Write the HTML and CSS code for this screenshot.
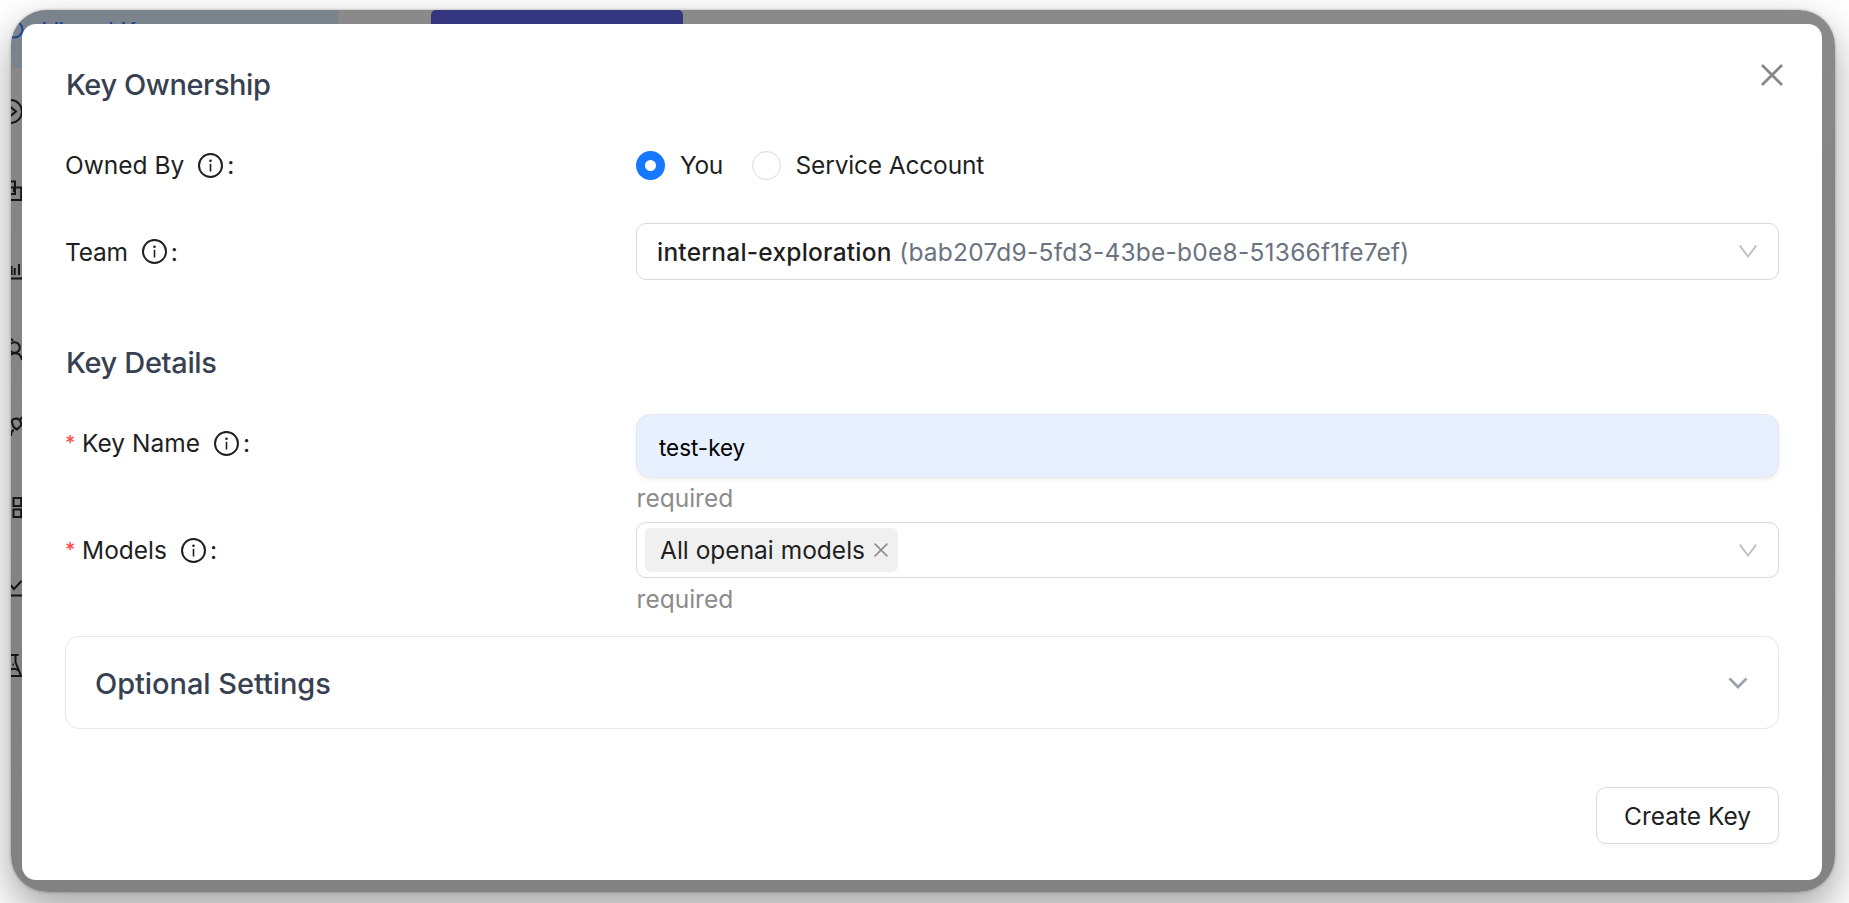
FILE: index.html
```html
<!DOCTYPE html>
<html lang="en">
<head>
<meta charset="utf-8">
<title>Create Key</title>
<link rel="stylesheet" href="styles.css">
</head>
<body>
<svg class="defs" width="0" height="0">
  <symbol id="info" viewBox="0 0 25 25">
    <circle cx="12.5" cy="12.5" r="11.5" fill="none" stroke="currentColor" stroke-width="2"/>
    <circle cx="12.5" cy="7.7" r="1.3" fill="currentColor"/>
    <path d="M12.5 10.8V18.5" stroke="currentColor" stroke-width="1.6"/>
  </symbol>
  <symbol id="arrow" viewBox="0 0 18 13">
    <path d="M.8 .6 9 11.6 17.2 .6" fill="none" stroke="currentColor" stroke-width="1.8"/>
  </symbol>
  <symbol id="cross" viewBox="0 0 22 22">
    <path d="M1 1 21 21M21 1 1 21" fill="none" stroke="currentColor"/>
  </symbol>
</svg>
<div class="window">
  <div class="backdrop">
    <div class="nav-active"></div>
    <div class="primary-tab"></div>
    <div class="nav-text">Virtual Keys</div>
    <svg class="nav-icons" width="14" height="882" viewBox="11 10 14 882" fill="none" stroke="#151515" stroke-width="2">
      <circle cx="14.5" cy="29.5" r="8" stroke="#15458f" stroke-width="2"/>
      <circle cx="10.5" cy="111.500" r="11.500"/>
      <path d="M10 106.500 16 111.500 10 116.500"/>
      <path d="M11 181.500H15V194H11M11 187.500H21.200V200H11M14 187.500V192"/>
      <path d="M11.500 266V275M14.700 268V275M19 264V275M11 278.500H22"/>
      <circle cx="14.500" cy="347.500" r="5.300"/>
      <path d="M10 355Q20 350 22 360M11 338.500 13 341"/>
      <path d="M12 421Q12 418.500 17 418.500Q21 420 21.500 425L17 429.500Q12 427 12 421ZM20 420 22 417M11 436Q11 431 14 430"/>
      <path d="M13.500 498H21.200V506H13.500ZM13.500 509.500H21.200V517H13.500Z"/>
      <path d="M10 584.500 14 589 21.500 581M11 595.500H22"/>
      <path d="M11 655H18.500M15.500 655V662L21 676H11M10 670Q15 667 19 671M12.500 664.500H14"/>
    </svg>
  </div>
  <div class="modal">
    <svg class="close" width="22" height="22"><use href="#cross"/></svg>
    <h2 class="heading heading-owner">Key Ownership</h2>
    <div class="row row-owned">
      <div class="label"><span>Owned By</span><svg class="info" width="25" height="25"><use href="#info"/></svg><span class="colon">:</span></div>
      <div class="radios">
        <span class="radio checked"></span><span class="radio-text t-you">You</span>
        <span class="radio"></span><span class="radio-text t-service">Service Account</span>
      </div>
    </div>
    <div class="row row-team">
      <div class="label"><span class="t-team">Team</span><svg class="info" width="25" height="25"><use href="#info"/></svg><span class="colon">:</span></div>
      <div class="select select-team">
        <span class="team-name">internal-exploration</span><span class="team-id">(bab207d9-5fd3-43be-b0e8-51366f1fe7ef)</span>
        <svg class="arrow" width="18" height="13"><use href="#arrow"/></svg>
      </div>
    </div>
    <h2 class="heading heading-details">Key Details</h2>
    <div class="row row-name">
      <div class="label"><span class="star">*</span><span>Key Name</span><svg class="info" width="25" height="25"><use href="#info"/></svg><span class="colon">:</span></div>
      <div class="field">
        <div class="input">test-key</div>
        <div class="help">required</div>
      </div>
    </div>
    <div class="row row-models">
      <div class="label"><span class="star">*</span><span>Models</span><svg class="info" width="25" height="25"><use href="#info"/></svg><span class="colon">:</span></div>
      <div class="field">
        <div class="select select-models">
          <span class="tag"><span>All openai models</span><svg class="tag-x" width="14" height="14"><use href="#cross"/></svg></span>
          <svg class="arrow" width="18" height="13"><use href="#arrow"/></svg>
        </div>
        <div class="help">required</div>
      </div>
    </div>
    <div class="panel">
      <span>Optional Settings</span>
      <svg width="20" height="13" viewBox="0 0 20 13"><path d="M1.500 1.500 10 10 18.500 1.500" fill="none" stroke="#9ca3af" stroke-width="2.800"/></svg>
    </div>
    <div class="footer"><button class="create">Create Key</button></div>
  </div>
</div>
</body>
</html>
```
FILE: styles.css
```css
* { box-sizing: border-box; }
body {
  margin: 0;
  width: 1849px;
  height: 903px;
  padding: 10px 14px 11px 11px;
  overflow: hidden;
  background: #fff;
  font-family: Inter, "Liberation Sans", sans-serif;
  font-size: 24.5px;
  line-height: 36px;
  color: #1f1f1f;
}
.defs { position: absolute; }
svg { display: block; flex: none; }
.window {
  position: relative;
  width: 1824px;
  height: 882px;
  padding: 14px 13px 12px 11px;
  border-radius: 36px;
  box-shadow: 0 0 3px rgba(0, 0, 0, .3), 0 18px 42px rgba(0, 0, 0, .36);
}
.backdrop {
  position: absolute;
  inset: 0;
  overflow: hidden;
  border-radius: 36px;
  background: linear-gradient(#8a8a8a, #858585 20%, #828282);
}
.nav-active {
  position: absolute;
  left: 0;
  top: 0;
  width: 327px;
  height: 58px;
  background: #7b838c;
}
.primary-tab {
  position: absolute;
  left: 420px;
  top: 0;
  width: 252px;
  height: 20px;
  border-radius: 5px 5px 0 0;
  background: #34367f;
}
.nav-text {
  position: absolute;
  left: 31px;
  top: 4px;
  color: #15458f;
  font-size: 24px;
  letter-spacing: -.2px;
}
.nav-icons { position: absolute; left: 0; top: 0; }
.modal {
  position: relative;
  height: 856px;
  padding: 42px 43px 35px;
  border-radius: 14px;
  background: #fff;
}
.close {
  position: absolute;
  right: 39.5px;
  top: 39.5px;
  color: #888;
  stroke-width: 2.7;
}
.heading {
  margin: 0;
  height: 38px;
  padding-left: 1px;
  line-height: 38px;
  font-size: 29px;
  font-weight: 500;
  letter-spacing: -.42px;
  color: #374151;
}
.row { display: grid; grid-template-columns: 571px 1fr; }
.label { display: flex; align-items: center; height: 36px; white-space: nowrap; }
.t-team { letter-spacing: -.2px; }
.info { margin-left: 14px; }
.colon { margin-left: 4px; }
.star { width: 17px; color: #ff4d4f; font-size: 20px; font-weight: 500; }
.row-owned { margin-top: 43px; }
.radios { display: flex; align-items: center; height: 36px; }
.radio {
  width: 29px;
  height: 29px;
  border: 1px solid #d9d9d9;
  border-radius: 50%;
}
.radio.checked { border: 9px solid #1677ff; }
.radio-text { margin-left: 15px; white-space: nowrap; }
.t-you { width: 71.5px; letter-spacing: -.3px; }
.t-service { letter-spacing: -.16px; }
.row-team { margin-top: 40px; align-items: center; }
.select {
  display: flex;
  align-items: center;
  border: 1px solid #d9d9d9;
  border-radius: 10px;
  white-space: nowrap;
}
.select-team { height: 57px; padding-left: 20px; }
.team-name { font-weight: 500; letter-spacing: .22px; }
.team-id { margin-left: 7.500px; color: #6b7280; letter-spacing: .24px; }
.arrow { margin: 0 21px 0 auto; color: #bfbfbf; }
.heading-details { margin-top: 64px; letter-spacing: -.34px; }
.row-name { margin-top: 32px; height: 108px; }
.row-name .label { margin-top: 11px; }
.input {
  height: 64px;
  padding: 0 22px;
  border: 1px solid #e5e7eb;
  border-radius: 14px;
  background: #e6f0ff;
  box-shadow: 0 2px 4px rgba(0, 0, 0, .06);
  line-height: 66px;
  font-size: 22.4px;
  color: #000;
}
.help { height: 40px; line-height: 40px; padding-left: .6px; color: #8c8c8c; }
.row-models { height: 114px; }
.row-models .label { margin-top: 10px; }
.row-models .help { padding-top: 1px; }
.select-models { height: 56px; padding-left: 8px; }
.tag {
  display: flex;
  align-items: center;
  width: 253px;
  height: 44px;
  padding: 0 10px 0 15px;
  border-radius: 6px;
  background: #f0f0f0;
}
.tag-x { margin-left: auto; color: #8c8c8c; stroke-width: 2.4; }
.panel {
  display: flex;
  align-items: center;
  justify-content: space-between;
  height: 93px;
  padding: 2px 30px 0 29px;
  border: 1px solid #e5e7eb;
  border-radius: 14px;
  font-size: 29px;
  font-weight: 500;
  letter-spacing: -.06px;
  color: #374151;
}
.footer { display: flex; justify-content: flex-end; margin-top: 58px; }
.create {
  width: 183px;
  height: 57px;
  padding: 0;
  border: 1px solid #d9d9d9;
  border-radius: 10px;
  background: #fff;
  box-shadow: 0 4px 0 rgba(0, 0, 0, .02);
  font: inherit;
  color: #1f1f1f;
}
```
